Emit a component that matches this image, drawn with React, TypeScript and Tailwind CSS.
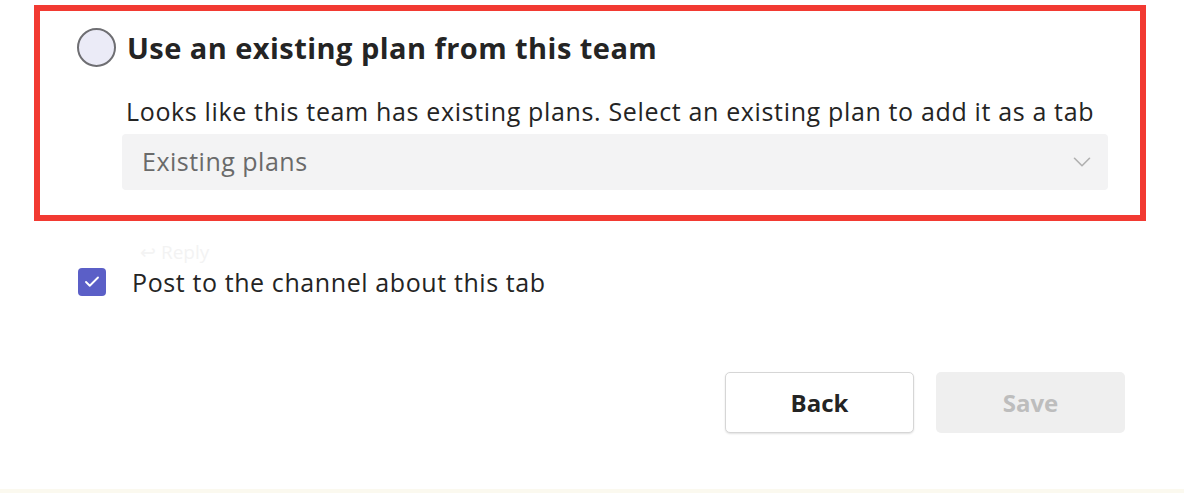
import { ChevronDown, Check } from 'lucide-react';

const font = { fontFamily: '"Open Sans", "Noto Sans", sans-serif' };

export default function App() {
  return (
    <div className="relative h-[493px] w-[1184px] overflow-hidden bg-white text-[#242424]" style={font}>
      <section className="ml-[34px] mt-[5px] h-[216px] w-[1112px] border-[6px] border-[#f23a32]">
        <div className="flex items-center gap-[11px] pl-[37px] pt-[17px]">
          <span className="h-[39px] w-[39px] rounded-full border-2 border-[#6e6e72] bg-[#ebebf7]" />
          <h2 className="text-[29px] font-bold leading-[38px] tracking-[0.45px]">Use an existing plan from this team</h2>
        </div>
        <div className="ml-[82px] mt-[27px] w-[986px]">
          <p className="pl-[4px] text-[25px] leading-[34px] tracking-[0.65px]">
            Looks like this team has existing plans. Select an existing plan to add it as a tab
          </p>
          <div className="mt-[6px] flex h-[56px] items-center justify-between rounded-[4px] bg-[#f3f3f4] pl-[20px] pr-[11px]">
            <span className="text-[25px] tracking-[0.5px] text-[#6a6a6a]">Existing plans</span>
            <ChevronDown className="h-[30px] w-[30px] text-[#b0b0b0]" strokeWidth={1.3} />
          </div>
        </div>
      </section>

      <div className="relative ml-[78px] mt-[45px] flex items-center gap-[26px]">
        <span className="absolute left-[62px] top-[-24px] text-[19px] leading-[20px] text-[#f3f3f3]">↩ Reply</span>
        <span className="flex h-[28px] w-[28px] items-center justify-center rounded-[4px] bg-[#5b5fc7]">
          <Check className="h-[18px] w-[18px] text-white" strokeWidth={2.5} />
        </span>
        <span className="text-[25px] leading-[32px] tracking-[0.6px]">Post to the channel about this tab</span>
      </div>

      <div className="mr-[59px] mt-[74px] flex justify-end gap-[22px]">
        <button className="h-[61px] w-[189px] rounded-[5px] border border-[#d6d6d6] bg-white text-[24px] font-bold text-[#242424] shadow-[0_1px_2px_rgba(0,0,0,0.12)]">
          Back
        </button>
        <button className="h-[61px] w-[189px] rounded-[5px] bg-[#efefef] text-[24px] font-bold text-[#bdbdbd]">
          Save
        </button>
      </div>

      <div className="absolute bottom-0 left-0 h-[4px] w-full bg-[#fbf9ef]" />
    </div>
  );
}
